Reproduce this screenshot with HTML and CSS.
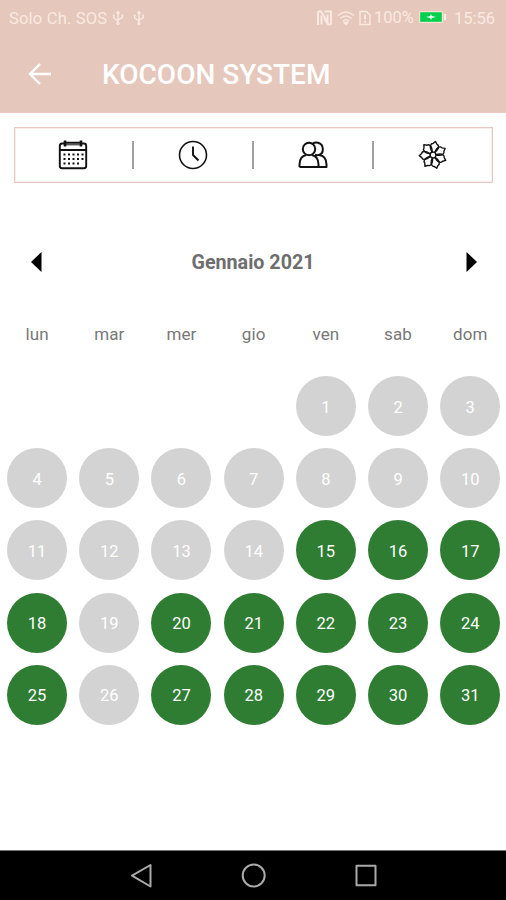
FILE: index.html
```html
<!DOCTYPE html>
<html lang="it">
<head>
<meta charset="utf-8">
<title>Kocoon System</title>
<link rel="stylesheet" href="styles.css">
</head>
<body>
<div class="screen">
  <header class="top">
    <div class="status">
      <span class="carrier">Solo Ch. SOS</span>
      <svg class="usb" width="12" height="16" viewBox="0 0 12 16"><path d="M6 2v11M1.700 5v3L6 11M10.300 5v2.500L6 10M4.500 3.500L6 1.500l1.500 2M.8 5.300h1.800M9.400 5.300h1.800"/><circle cx="6" cy="13.500" r="1"/></svg>
      <svg class="usb second" width="12" height="16" viewBox="0 0 12 16"><path d="M6 2v11M1.700 5v3L6 11M10.300 5v2.500L6 10M4.500 3.500L6 1.500l1.500 2M.8 5.300h1.800M9.400 5.300h1.800"/><circle cx="6" cy="13.500" r="1"/></svg>
      <span class="spacer"></span>
      <svg class="nfc" width="17" height="16" viewBox="0 0 17 16"><path d="M2 15V2.500Q2 1.500 3 1.500h2L11.500 12V4.500M5.500 5.500V14.500M8.500 1.500H15V13.500Q15 14.500 14 14.500h-2L8 8"/></svg>
      <svg class="wifi" width="18" height="16" viewBox="0 0 18 16"><path d="M1 5.500q8-7 16 0M3.500 8.300q5.500-4.800 11 0M6 11q3-2.600 6 0"/><path class="solid" d="M7.200 12.500h3.600L9 14.700z"/></svg>
      <svg class="sim" width="12" height="16" viewBox="0 0 12 16"><path d="M1 1.500h6.500L11 5v9.500H1z"/><path d="M6 4.500v5M6 11v1.800" stroke-width="1.900"/></svg>
      <span class="percent">100%</span>
      <svg class="battery" width="28" height="12" viewBox="0 0 28 12"><rect x=".5" y=".5" width="23" height="11" rx="1" fill="#00d04b" stroke="#f3ded3"/><path d="M26 3v6" stroke="#fbefe8" stroke-width="2"/><path d="M7 6l4-1 1-2 1 2 4 1-4 1-1 2-1-2z" fill="#e9fff0"/></svg>
      <span class="time">15:56</span>
    </div>
    <div class="appbar">
      <svg class="back" width="24" height="24" viewBox="0 0 24 24"><path d="M23 12H2M12 2L2 12l10 10"/></svg>
      <h1>KOCOON SYSTEM</h1>
    </div>
  </header>

  <nav class="tabs">
    <svg class="icon" width="30" height="30" viewBox="0 0 30 30">
      <path d="M6 3.500H4Q1.800 3.500 1.800 6v20q0 2.200 2.200 2.200h22q2.200 0 2.200-2.200V6q0-2.500-2.200-2.500h-2M8 2.800h14M1.800 10h26.400" stroke-width="1.900"/>
      <path d="M7 .5v6M23 .5v6" stroke-width="2.600"/><path d="M8 4.800h14" stroke-width="1"/>
      <path d="M5.500 14.500h20M5.500 19h20M5.500 23.500h16" stroke-width="2" stroke-dasharray="2 2.500"/>
    </svg>
    <span class="divider"></span>
    <svg class="icon" width="30" height="30" viewBox="0 0 30 30"><circle cx="15" cy="15" r="13.500" stroke-width="1.600"/><path d="M15 6.500V15l5.500 5.500" stroke-width="1.900"/></svg>
    <span class="divider"></span>
    <svg class="icon" width="30" height="30" viewBox="0 0 30 30"><g stroke-width="2"><circle cx="11" cy="9" r="6.200"/><path d="M1.500 27v-2.500q0-8.500 6.800-9.600M13.700 14.900Q20.500 16 20.500 24.500V27M14.500 3.800Q17 2 20 2.800c6.500 1.700 6 10.800 1 12.100q7.500 1 7.500 9.600V27h-27M17 14.700q2 .8 4 .2"/></g></svg>
    <span class="divider"></span>
    <svg class="icon" width="30" height="30" viewBox="0 0 30 30">
      <defs><path id="petal" d="M13.800 12.300Q10.600 9 11 6q.2-2 2-2.300L15 1.200l2 2.500q1.800.3 2 2.300.4 3-2.800 6.300"/></defs>
      <g stroke-width="1.400" transform="rotate(10 15 15)"><circle cx="15" cy="15" r="2.900"/>
      <use href="#petal"/><use href="#petal" transform="rotate(51.430 15 15)"/><use href="#petal" transform="rotate(102.860 15 15)"/><use href="#petal" transform="rotate(154.290 15 15)"/><use href="#petal" transform="rotate(205.710 15 15)"/><use href="#petal" transform="rotate(257.140 15 15)"/><use href="#petal" transform="rotate(308.570 15 15)"/></g>
    </svg>
  </nav>

  <div class="month">
    <svg width="11" height="20" viewBox="0 0 11 20"><path d="M10.500 0v20L0 10z"/></svg>
    <h2>Gennaio 2021</h2>
    <svg width="11" height="20" viewBox="0 0 11 20"><path d="M.5 0v20L11 10z"/></svg>
  </div>

  <div class="week names"><span>lun</span><span>mar</span><span>mer</span><span>gio</span><span>ven</span><span>sab</span><span>dom</span></div>

  <main class="week days">
    <span class="day first">1</span><span class="day">2</span><span class="day">3</span>
    <span class="day">4</span><span class="day">5</span><span class="day">6</span><span class="day">7</span><span class="day">8</span><span class="day">9</span><span class="day">10</span>
    <span class="day">11</span><span class="day">12</span><span class="day">13</span><span class="day">14</span><span class="day open">15</span><span class="day open">16</span><span class="day open">17</span>
    <span class="day open">18</span><span class="day">19</span><span class="day open">20</span><span class="day open">21</span><span class="day open">22</span><span class="day open">23</span><span class="day open">24</span>
    <span class="day open">25</span><span class="day">26</span><span class="day open">27</span><span class="day open">28</span><span class="day open">29</span><span class="day open">30</span><span class="day open">31</span>
  </main>

  <footer class="navbar">
    <svg width="24" height="26" viewBox="0 0 24 26"><path d="M20.500 2v21.500L2 12.700z"/></svg>
    <svg width="26" height="26" viewBox="0 0 26 26"><circle cx="12.700" cy="12.500" r="11"/></svg>
    <svg width="24" height="26" viewBox="0 0 24 26"><rect x="2.500" y="2.700" width="19" height="19.500"/></svg>
  </footer>
</div>
</body>
</html>
```

FILE: styles.css
```css
* { box-sizing: border-box; }
body { margin: 0; background: #fff; font-family: Roboto, "Liberation Sans", sans-serif; }
svg { display: block; flex: none; fill: none; }
h1, h2 { margin: 0; }

.screen { width: 506px; height: 900px; display: flex; flex-direction: column; overflow: hidden; }

.top { height: 113px; flex: none; background: #e5c7bc; border-bottom: 1px solid #edc9c6; }
.status { height: 36px; display: flex; align-items: center; padding: 0 11px 0 9px; color: #fae9e0; font-size: 16.500px; }
.status svg { stroke: #fae9e0; stroke-width: 1.400; }
.status .battery { stroke: none; margin: 0 0 2px 4px; }
.carrier { width: 99px; white-space: nowrap; letter-spacing: .2px; }
.usb { margin-left: 4px; }
.usb.second { margin-left: 9px; }
.spacer { flex: 1; }
.status .nfc { stroke-width: 2; }
.wifi { margin-left: 4px; }
.wifi .solid { fill: #fae9e0; }
.sim { margin-left: 4px; }
.percent { width: 41px; margin-left: 3px; padding-bottom: 2px; white-space: nowrap; }
.time { width: 41px; margin-left: 7px; white-space: nowrap; }

.appbar { height: 76px; display: flex; align-items: center; padding-left: 28px; }
.back { stroke: #fff; stroke-width: 2.400; }
h1 { margin-left: 50px; padding-top: 1px; color: #fff; font-size: 28px; font-weight: 500; line-height: 32px; white-space: nowrap; }

.tabs { height: 56px; flex: none; margin: 14px 13px 0 14px; border: 1px solid #e5c9c1; outline: 1px solid #f8edea; outline-offset: -2px; display: flex; align-items: center; justify-content: space-between; padding: 0 44px 0 43px; }
.icon { stroke: #111; stroke-linejoin: round; }
.divider { width: 2px; height: 28px; background: #a0a0a0; }

.month { height: 40px; flex: none; margin-top: 59px; padding: 0 29px 0 31px; display: flex; align-items: center; justify-content: space-between; }
.month svg { fill: #000; }
h2 { padding: 1px 2px 0 0; color: #6e6e6e; font-size: 19.700px; font-weight: 700; }

.week { display: grid; grid-template-columns: repeat(7, 72.200px); justify-items: center; margin-left: 1px; flex: none; }
.names { height: 24px; margin-top: 40px; align-items: center; color: #777; font-size: 17px; letter-spacing: .1px; }
.days { grid-auto-rows: 72.200px; align-items: center; margin-top: 24px; }
.day { width: 60px; height: 60px; border-radius: 50%; display: flex; align-items: center; justify-content: center; padding-top: 2px; background: #d3d3d3; color: #fff; font-size: 16.500px; }
.first { grid-column: 5; }
.open { background: #2e7d32; }

.navbar { height: 50px; flex: none; margin-top: auto; border-top: 1px solid #777; background: #000; display: flex; align-items: center; justify-content: space-between; padding: 0 128px 0 130px; }
.navbar svg { stroke: #aaa; stroke-width: 2; stroke-linejoin: round; }
```
